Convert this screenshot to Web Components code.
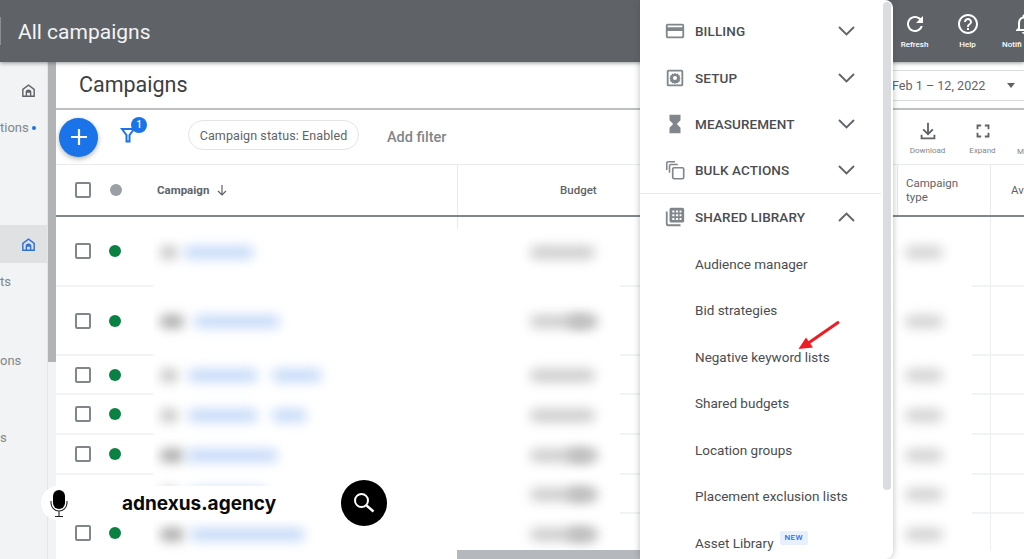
<!DOCTYPE html>
<html lang="en">
<head>
<meta charset="utf-8">
<title>All campaigns</title>
<style>
  html, body { margin: 0; height: 559px; overflow: hidden; background: #fff; }
  body { font-family: Roboto, "Liberation Sans", sans-serif; }
</style>
</head>
<body>
<ads-app>
  <ads-topbar slot="top" title="All campaigns">
    <ads-top-action label="Refresh" icon="refresh"></ads-top-action>
    <ads-top-action label="Help" icon="help"></ads-top-action>
    <ads-top-action label="Notifi" icon="bell" edge></ads-top-action>
  </ads-topbar>
  <ads-nav slot="nav"></ads-nav>
  <ads-heading slot="main"></ads-heading>
  <ads-toolbar slot="main"></ads-toolbar>
  <ads-table slot="main">
    <ads-row h="70" grey="18" blue="70" name2="0" budget="65" tail="0" pad="6"></ads-row>
    <ads-row h="69" grey="24" blue="86" name2="0" budget="60" tail="30" pad="10"></ads-row>
    <ads-row h="39" grey="18" blue="70" name2="50" budget="65" tail="0" pad="10"></ads-row>
    <ads-row h="40" grey="18" blue="70" name2="35" budget="65" tail="0" pad="10"></ads-row>
    <ads-row h="40" grey="24" blue="92" name2="0" budget="60" tail="30" pad="2"></ads-row>
    <ads-row h="39" grey="18" blue="80" name2="0" budget="60" tail="30" pad="10"></ads-row>
    <ads-row h="40" grey="24" blue="115" name2="0" budget="60" tail="30" pad="6" last></ads-row>
  </ads-table>
  <ads-menu slot="over">
    <ads-menu-group icon="card" label="BILLING"></ads-menu-group>
    <ads-menu-group icon="gear" label="SETUP"></ads-menu-group>
    <ads-menu-group icon="hourglass" label="MEASUREMENT"></ads-menu-group>
    <ads-menu-group icon="copies" label="BULK ACTIONS" divider></ads-menu-group>
    <ads-menu-group icon="library" label="SHARED LIBRARY" open></ads-menu-group>
    <ads-menu-link>Audience manager</ads-menu-link>
    <ads-menu-link>Bid strategies</ads-menu-link>
    <ads-menu-link>Negative keyword lists</ads-menu-link>
    <ads-menu-link>Shared budgets</ads-menu-link>
    <ads-menu-link>Location groups</ads-menu-link>
    <ads-menu-link>Placement exclusion lists</ads-menu-link>
    <ads-menu-link badge="NEW">Asset Library</ads-menu-link>
  </ads-menu>
  <ads-search-pill slot="over">adnexus.agency</ads-search-pill>
</ads-app>

<script>
const ICONS = {
  refresh: '<path d="M17.65 6.35C16.2 4.9 14.21 4 12 4c-4.42 0-7.99 3.58-7.99 8s3.57 8 7.99 8c3.73 0 6.84-2.55 7.73-6h-2.08c-.82 2.33-3.04 4-5.65 4-3.31 0-6-2.69-6-6s2.69-6 6-6c1.66 0 3.14.69 4.22 1.78L13 11h7V4l-2.35 2.35z"/>',
  help: '<path d="M11 18h2v-2h-2v2zm1-16C6.48 2 2 6.48 2 12s4.48 10 10 10 10-4.48 10-10S17.52 2 12 2zm0 18c-4.41 0-8-3.59-8-8s3.59-8 8-8 8 3.59 8 8-3.59 8-8 8zm0-14c-2.21 0-4 1.79-4 4h2c0-1.1.9-2 2-2s2 .9 2 2c0 2-3 1.75-3 5h2c0-2.25 3-2.5 3-5 0-2.21-1.79-4-4-4z"/>',
  bell: '<path d="M12 22c1.1 0 2-.9 2-2h-4c0 1.1.9 2 2 2zm6-6v-5c0-3.07-1.63-5.64-4.5-6.32V4c0-.83-.67-1.5-1.5-1.5s-1.5.67-1.5 1.5v.68C7.64 5.36 6 7.92 6 11v5l-2 2v1h16v-1l-2-2zm-2 1H8v-6c0-2.48 1.51-4.5 4-4.5s4 2.02 4 4.5v6z"/>',
  card: '<path d="M20 4H4c-1.11 0-1.99.89-1.99 2L2 18c0 1.11.89 2 2 2h16c1.11 0 2-.89 2-2V6c0-1.11-.89-2-2-2zm0 14H4v-6h16v6zm0-10H4V6h16v2z"/>',
  gear: '<path fill-rule="evenodd" d="M5 3h14a2 2 0 0 1 2 2v14a2 2 0 0 1-2 2H5a2 2 0 0 1-2-2V5a2 2 0 0 1 2-2zm0 2v14h14V5H5zm7 1.500l1.300 1 1.800-.3.8 1.500 1.500.8-.3 1.800 1 1.200-1 1.200.3 1.800-1.500.8-.8 1.500-1.800-.3-1.300 1-1.300-1-1.800.3-.8-1.500-1.500-.8.3-1.800-1-1.200 1-1.200-.3-1.800 1.500-.8.8-1.500 1.800.3 1.300-1zm0 3.300a2.200 2.200 0 1 0 0 4.400 2.200 2.200 0 0 0 0-4.400z"/>',
  hourglass: '<path d="M6 2v6h.01L6 8.01 10 12l-4 4 .01.01H6V22h12v-5.99h-.01L18 16l-4-4 4-3.99-.01-.01H18V2H6z"/>',
  copies: '<path fill="none" stroke="currentColor" stroke-width="1.7" d="M3 12V4.5C3 3.7 3.7 3 4.5 3H12M6 15V7.500C6 6.700 6.700 6 7.500 6H15"/><rect x="9.500" y="9.500" width="12" height="12" rx="1.500" fill="none" stroke="currentColor" stroke-width="1.8"/>',
  library: '<path d="M4 6H2v14c0 1.100.9 2 2 2h14v-2H4V6z"/><path fill-rule="evenodd" d="M8 2h12c1.100 0 2 .9 2 2v12c0 1.100-.9 2-2 2H8c-1.100 0-2-.9-2-2V4c0-1.100.9-2 2-2zm1 3v2.200h2.400V5H9zm4 0v2.200h2.400V5H13zm4 0v2.200h2V5h-2zM9 9v2.200h2.400V9H9zm4 0v2.200h2.400V9H13zm4 0v2.200h2V9h-2zM9 13v2.200h2.400V13H9zm4 0v2.200h2.400V13H13zm4 0v2.200h2V13h-2z"/>',
  download: '<path d="M11 3h2v10.200l3.600-3.600L18 11l-6 6-6-6 1.400-1.400 3.600 3.600V3zM4 16h2v3h12v-3h2v5H4v-5z"/>',
  expand: '<path d="M7 14H5v5h5v-2H7v-3zm-2-4h2V7h3V5H5v5zm12 7h-3v2h5v-5h-2v3zM14 5v2h3v3h2V5h-5z"/>',
  home: '<path fill-rule="evenodd" d="M12 3l9 7v11H3V10l9-7zm0 2.500L5 11v8h3v-4.500a4 4 0 0 1 8 0V19h3v-8l-7-5.500zM10 19h4v-4h-4v4z"/>'
};
const icon = (name, size) => `<svg width="${size}" height="${size}" viewBox="0 0 24 24" fill="currentColor" aria-hidden="true">${ICONS[name]}</svg>`;

// small helper so every element is the same few lines
function shadow(el, html) {
  el.attachShadow({ mode: 'open' }).innerHTML = html;
}

class AdsApp extends HTMLElement {
  connectedCallback() {
    shadow(this, `
      <style>
        :host { display: grid; grid-template-rows: 62px 497px; grid-template-columns: 56px 968px;
                width: 1024px; height: 559px; overflow: hidden; position: relative; }
        .top { grid-column: 1 / 3; z-index: 2; }
        .main { display: flex; flex-direction: column; min-width: 0; overflow: hidden; }
      </style>
      <div class="top"><slot name="top"></slot></div>
      <slot name="nav"></slot>
      <div class="main"><slot name="main"></slot></div>
      <slot name="over"></slot>`);
  }
}

class AdsTopbar extends HTMLElement {
  connectedCallback() {
    shadow(this, `
      <style>
        :host { display: flex; align-items: center; height: 62px; background: #5f6368; color: #fff;
                box-shadow: 0 1px 4px rgba(60,64,67,.55); }
        .rule { width: 1px; height: 28px; background: #8a8d91; }
        h1 { margin: 2px 0 0 17px; font: 400 21px/1 Roboto, sans-serif; flex: 1; color: #f3f4f4; }
        .actions { display: flex; width: 136px; overflow: hidden; }
      </style>
      <span class="rule"></span>
      <h1>${this.getAttribute('title')}</h1>
      <div class="actions"><slot></slot></div>`);
  }
}

class AdsTopAction extends HTMLElement {
  connectedCallback() {
    const edge = this.hasAttribute('edge');
    shadow(this, `
      <style>
        :host { display: flex; flex-direction: column; align-items: center; width: ${edge ? 44 : 53}px; flex: none;
                margin-left: ${edge ? 8 : 0}px; color: #fff; font: 500 8px/10px Roboto, sans-serif; white-space: nowrap; }
        svg { display: block; margin-bottom: 4px; }
        span { ${edge ? 'align-self: flex-start;' : ''} }
      </style>
      ${icon(this.getAttribute('icon'), 24)}
      <span>${this.getAttribute('label')}</span>`);
  }
}

class AdsNav extends HTMLElement {
  connectedCallback() {
    shadow(this, `
      <style>
        :host { display: flex; width: 56px; height: 497px; background: #f1f3f4; overflow: hidden; }
        .col { width: 47px; border-right: 1px solid #e3e5e7; display: flex; flex-direction: column;
               font: 400 13px/16px Roboto, sans-serif; color: #80868b; }
        .row { display: flex; align-items: center; justify-content: flex-end; height: 38px; padding-right: 10px; }
        .row.text { justify-content: flex-start; padding: 0; }
        .home { color: #5f6368; margin-top: 9px; }
        .on { background: #dfe1e3; color: #2f6fd6; margin-top: 78px; }
        .dot { width: 4px; height: 4px; border-radius: 50%; background: #1a73e8; margin-left: 3px; }
        .rail { width: 8px; height: 300px; background: #b2b3b4; }
      </style>
      <div class="col">
        <div class="row home">${icon('home', 17)}</div>
        <div class="row text"><span>tions</span><span class="dot"></span></div>
        <div class="row on">${icon('home', 17)}</div>
        <div class="row text">ts</div>
        <div class="row text" style="margin-top:41px">ons</div>
        <div class="row text" style="margin-top:39px">s</div>
      </div>
      <div class="rail"></div>`);
  }
}

class AdsHeading extends HTMLElement {
  connectedCallback() {
    shadow(this, `
      <style>
        :host { display: flex; align-items: center; height: 46px; flex: none; background: #fff;
                border-bottom: 2px solid #bdbfc1; font-family: Roboto, sans-serif; }
        h2 { margin: 0 0 0 23px; font: 400 21.500px/1 Roboto, sans-serif; color: #3c4043; flex: 1; }
        .date { width: 132px; flex: none; display: flex; align-items: center; height: 29px; margin-top: 1px;
                border-top: 1px solid #dadce0; border-bottom: 1px solid #dadce0; font-size: 12.600px; color: #5f6368; }
        .date span { flex: 1; }
        .caret { width: 0; height: 0; border: 4px solid transparent; border-top: 5px solid #5f6368; border-bottom: 0; margin-right: 9px; }
      </style>
      <h2>Campaigns</h2>
      <div class="date"><span>Feb 1 – 12, 2022</span><i class="caret"></i></div>`);
  }
}

class AdsToolbar extends HTMLElement {
  connectedCallback() {
    shadow(this, `
      <style>
        :host { display: flex; align-items: center; height: 54px; flex: none; background: #fff; border-bottom: 1px solid #e8eaed;
                font-family: Roboto, sans-serif; overflow: hidden; }
        .fab { width: 39px; height: 39px; margin-left: 3px; border-radius: 50%; background: #1a73e8; flex: none;
               box-shadow: 0 2px 5px rgba(60,64,67,.4); display: flex; align-items: center; justify-content: center; }
        .filter { position: relative; width: 30px; height: 30px; margin: -12px 0 0 15px; flex: none; color: #1a73e8; }
        .filter svg { display: block; margin: 11px 0 0 7px; }
        .badge { position: absolute; left: 18px; top: 1px; width: 16px; height: 16px; border-radius: 50%; background: #1a73e8;
                 color: #fff; font: 500 10px/16px Roboto, sans-serif; text-align: center; }
        .chip { margin: 0 0 4px 45px; width: 171px; height: 30px; border: 1px solid #e2e4e6; border-radius: 15px; flex: none; box-sizing: border-box;
                display: flex; align-items: center; justify-content: center; font-size: 12.500px; color: #5f6368; white-space: nowrap; letter-spacing: .1px; }
        .add { margin-left: 28px; font-size: 14.500px; font-weight: 500; color: #80868b; flex: 1; }
        .act { width: 55px; flex: none; display: flex; flex-direction: column; align-items: center; color: #5f6368;
               font: 400 8px/10px Roboto, sans-serif; white-space: nowrap; padding-top: 3px; }
        .act svg { display: block; margin: -2px 0 4px; }
        .act span { color: #80868b; }
        .more { width: 14px; flex: none; font: 400 8px/10px Roboto, sans-serif; color: #80868b; padding-top: 29px; text-align: right; }
      </style>
      <div class="fab"><svg width="18" height="18" viewBox="0 0 18 18"><path d="M9 1v16M1 9h16" stroke="#fff" stroke-width="2.200"/></svg></div>
      <div class="filter">
        <svg width="16" height="16" viewBox="0 0 16 16" fill="none" stroke="currentColor" stroke-width="2"><path d="M2 2h12L9.500 8v6.500h-3V8z"/></svg>
        <span class="badge">1</span>
      </div>
      <div class="chip">Campaign status: Enabled</div>
      <div class="add">Add filter</div>
      <div class="act">${icon('download', 22)}<span>Download</span></div>
      <div class="act">${icon('expand', 22)}<span>Expand</span></div>
      <div class="more">M</div>`);
  }
}

class AdsTable extends HTMLElement {
  connectedCallback() {
    shadow(this, `
      <style>
        :host { display: flex; flex-direction: column; flex: none; height: 394px; background: #fff; font-family: Roboto, sans-serif; position: relative; overflow: hidden; }
        .head { display: grid; grid-template-columns: 401px 440px 93px 34px; height: 50px; border-bottom: 2px solid #80868b; flex: none;
                font: 500 11.500px/14px Roboto, sans-serif; color: #5f6368; }
        .head > div { display: flex; align-items: center; box-sizing: border-box; }
        .c1 { padding-left: 19px; }
        .box { width: 12px; height: 12px; border: 2px solid #80868b; border-radius: 2px; flex: none; }
        .grey { width: 12px; height: 12px; border-radius: 50%; background: #9aa0a6; margin-left: 19px; flex: none; }
        .name { margin-left: 35px; color: #5f6368; font-weight: 700; }
        .arrow { margin-left: 6px; color: #5f6368; }
        .c2 { border-left: 1px solid #e8eaed; padding-left: 102px; position: relative; }
        .c2::after { content: ""; position: absolute; left: -1px; top: 100%; width: 1px; height: 12px; background: #e8eaed; margin-top: 2px; }
        .c3 { border-left: 1px solid #e8eaed; padding-left: 8px; font-weight: 400; font-size: 11.500px; }
        .c4 { border-left: 1px solid #e8eaed; padding-left: 20px; font-weight: 400; }
        .scroll { position: absolute; left: 401px; bottom: 0; width: 183px; height: 9px; background: #b5b9be; }
        .wipe { position: absolute; left: 841px; right: 0; bottom: 0; height: 9px; background: #fff; }
      </style>
      <div class="head">
        <div class="c1"><i class="box"></i><i class="grey"></i><span class="name">Campaign</span>
          <svg class="arrow" width="14" height="14" viewBox="0 0 14 14" fill="none" stroke="currentColor" stroke-width="1.200"><path d="M7 2v10M3 8l4 4 4-4"/></svg>
        </div>
        <div class="c2">Budget</div>
        <div class="c3">Campaign<br>type</div>
        <div class="c4">Av</div>
      </div>
      <slot></slot>
      <div class="scroll"></div>
      <div class="wipe"></div>`);
  }
}

class AdsRow extends HTMLElement {
  connectedCallback() {
    const a = n => +this.getAttribute(n);
    const last = this.hasAttribute('last');
    const blur = (w, c, ml) => w ? `<i style="width:${w}px;background:${c};margin-left:${ml}px"></i>` : '';
    shadow(this, `
      <style>
        :host { display: grid; grid-template-columns: 97px 467px 273px 79px 18px 34px; height: ${a('h')}px; flex: none; box-sizing: border-box; }
        .line { border-bottom: 2px solid ${last ? 'transparent' : '#f1f3f4'}; }
        .c { display: flex; align-items: center; box-sizing: border-box; }
        .box { width: 12px; height: 12px; border: 2px solid #80868b; border-radius: 2px; margin-left: 19px; flex: none; }
        .dot { width: 12px; height: 12px; border-radius: 50%; background: #0b8043; margin-left: 18px; flex: none; }
        .mid { padding-left: 7px; overflow: hidden; }
        i { display: block; height: 13px; border-radius: 6px; filter: blur(6px); flex: none; }
        .end { border-left: 1px solid #eceef0; }
      </style>
      <div class="c line"><span class="box"></span><span class="dot"></span></div>
      <div class="c mid">
        ${blur(a('grey'), a('grey') > 20 ? '#a8a8a8' : '#c4c4c4', 0)}
        ${blur(a('blue'), '#c6daf8', a('pad'))}
        ${blur(a('name2'), '#c6daf8', 14)}
        <span style="width:${370 - a('grey') - a('blue') - a('pad') - (a('name2') ? a('name2') + 14 : 0)}px;flex:none"></span>
        ${blur(a('budget'), '#cccccc', 0)}
        ${a('tail') ? blur(a('tail'), '#bababa', -22) : ''}
      </div>
      <div class="c line"></div>
      <div class="c" style="padding-left:12px">${blur(38, '#d2d2d2', 0)}</div>
      <div class="c line"></div>
      <div class="c line end"></div>`);
  }
}

class AdsMenu extends HTMLElement {
  connectedCallback() {
    shadow(this, `
      <style>
        :host { position: absolute; left: 640px; top: 0; width: 253px; height: 559px; z-index: 3; background: #fff;
                border-radius: 0 8px 8px 0; box-shadow: 0 0 6px rgba(60,64,67,.35); padding-top: 8px; box-sizing: border-box;
                display: flex; flex-direction: column; overflow: hidden; font-family: Roboto, sans-serif; }
        .thumb { position: absolute; left: 243px; top: 2px; width: 8px; height: 488px; border-radius: 4px; background: #dadce0; }
      </style>
      <slot></slot>
      <div class="thumb"></div>`);
  }
}

class AdsMenuGroup extends HTMLElement {
  connectedCallback() {
    const open = this.hasAttribute('open');
    const chev = open ? 'M1 10l7.500-7.500L16 10' : 'M1 2l7.500 7.500L16 2';
    shadow(this, `
      <style>
        :host { display: flex; align-items: center; height: 46.500px; width: 241px; flex: none; box-sizing: border-box;
                color: #4a4d51; font: 500 13.500px/16px Roboto, sans-serif; letter-spacing: .1px; position: relative; }
        .ic { width: 22px; height: 22px; margin-left: 24px; margin-right: 9px; color: #80868b; flex: none; }
        .ic svg { display: block; }
        span { flex: 1; }
        .chev { margin-right: 26px; flex: none; }
        ${this.hasAttribute('divider') ? ':host { border-bottom: 1px solid #e8eaed; }' : ''}
      </style>
      <div class="ic">${icon(this.getAttribute('icon'), 22)}</div>
      <span>${this.getAttribute('label')}</span>
      <svg class="chev" width="17" height="12" viewBox="0 0 17 12" fill="none" stroke="#5f6368" stroke-width="1.800"><path d="${chev}"/></svg>`);
  }
}

class AdsMenuLink extends HTMLElement {
  connectedCallback() {
    const badge = this.getAttribute('badge');
    shadow(this, `
      <style>
        :host { display: flex; align-items: center; height: 46.500px; padding-left: 55px; flex: none; color: #4a4d51;
                font: 400 13.500px/16px Roboto, sans-serif; white-space: nowrap; }
        b { display: block; margin: -9px 0 0 6px; padding: 0 5px; height: 14px; background: #e8f0fe; border-radius: 2px;
            color: #1a73e8; font: 500 8px/14px Roboto, sans-serif; letter-spacing: .4px; }
      </style>
      <slot></slot>${badge ? `<b>${badge}</b>` : ''}
      ${this.textContent.startsWith('Negative') ? `<svg style="position:absolute;left:155px;top:318px" width="48" height="36" viewBox="0 0 48 36"><path d="M43 4.500L12 26" stroke="#ee1c25" stroke-width="3" stroke-linecap="round"/><path d="M3.500 31L11 19.500l7 10z" fill="#ee1c25"/></svg>` : ''}`);
  }
}

class AdsSearchPill extends HTMLElement {
  connectedCallback() {
    shadow(this, `
      <style>
        :host { position: absolute; left: 41px; top: 486px; width: 346px; height: 34px; z-index: 1; display: flex; align-items: center;
                font: 700 19px/1 Inter, "Open Sans", sans-serif; color: #0a0a0a; }
        .bar { position: absolute; left: 0; top: 0; width: 299px; height: 34px; background: #fff; border-radius: 17px 0 0 17px; }
        .mic { position: relative; margin-left: 9px; flex: none; display: block; }
        .txt { position: relative; margin-left: 54px; flex: 1; white-space: nowrap; }
        .go { position: relative; width: 46px; height: 46px; border-radius: 50%; background: #000; flex: none; display: flex; align-items: center; justify-content: center; margin-left: -46px; }
      </style>
      <div class="bar"></div>
      <svg class="mic" width="18" height="27" viewBox="0 0 18 27"><rect x="3" y="0" width="12" height="19" rx="6" fill="#000"/><path d="M1 11v2a8 8 0 0 0 16 0v-2M9 21v5M5 26.500h8" fill="none" stroke="#222" stroke-width="1.100"/></svg>
      <span class="txt"><slot></slot></span>
      <div class="go"><svg width="26" height="26" viewBox="0 0 26 26" fill="none" stroke="#fff" stroke-width="2"><circle cx="10.500" cy="10.500" r="6.500"/><path d="M15.500 15.500l7 6" stroke-width="2.400"/></svg></div>`);
  }
}

customElements.define('ads-app', AdsApp);
customElements.define('ads-topbar', AdsTopbar);
customElements.define('ads-top-action', AdsTopAction);
customElements.define('ads-nav', AdsNav);
customElements.define('ads-heading', AdsHeading);
customElements.define('ads-toolbar', AdsToolbar);
customElements.define('ads-table', AdsTable);
customElements.define('ads-row', AdsRow);
customElements.define('ads-menu', AdsMenu);
customElements.define('ads-menu-group', AdsMenuGroup);
customElements.define('ads-menu-link', AdsMenuLink);
customElements.define('ads-search-pill', AdsSearchPill);
</script>
</body>
</html>
